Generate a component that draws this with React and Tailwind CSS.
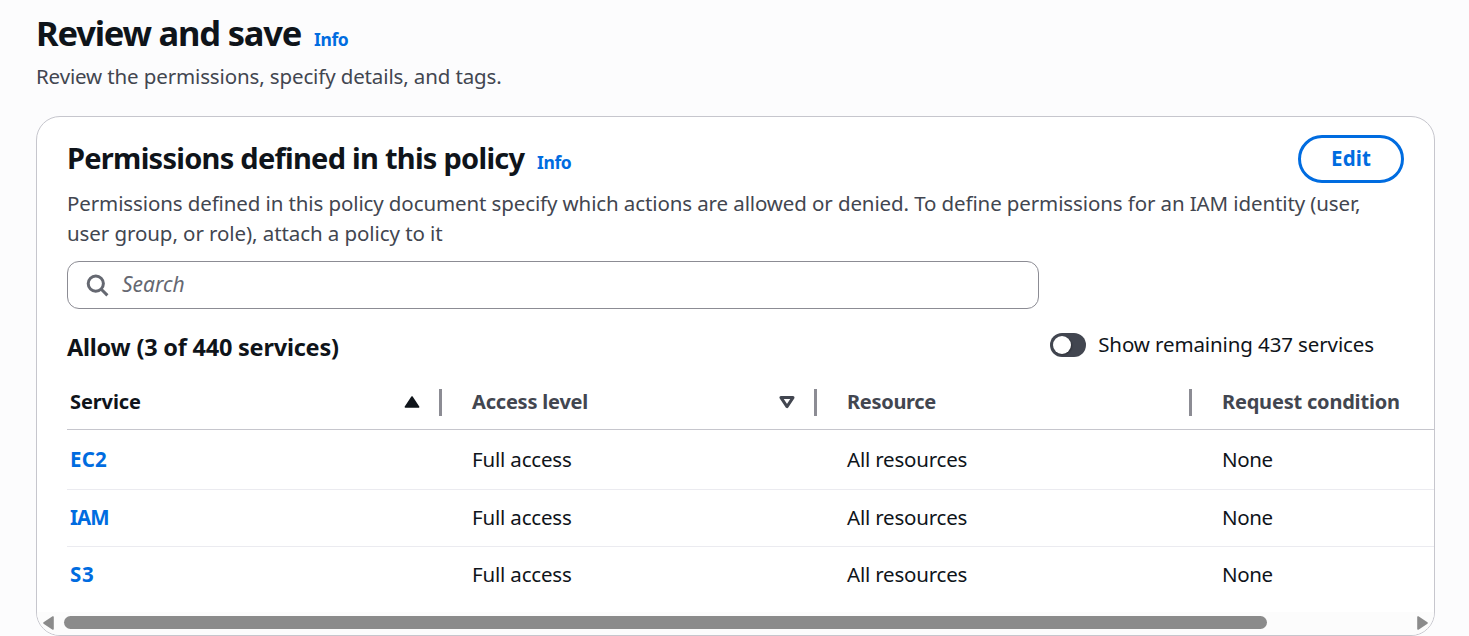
import React from "react";

const columns = [
  { label: "Service", sort: "asc", spacing: "tracking-[-0.1px]" },
  { label: "Access level", sort: "none", spacing: "tracking-[-0.2px]" },
  { label: "Resource", spacing: "tracking-[-0.3px]" },
  { label: "Request condition", spacing: "tracking-[-0.2px]" },
];

const rows = [
  { service: "EC2", spacing: "tracking-[0.2px]", box: "h-[60px] pb-[2px] border-b" },
  { service: "IAM", spacing: "tracking-[-1px]", box: "h-[57px] pb-[2px] border-b" },
  { service: "S3", spacing: "tracking-[0.6px]", box: "h-[57px] pb-[3px]" },
];

function InfoLink() {
  return (
    <a href="#" className="text-[17.5px] leading-6 font-bold tracking-[-0.4px] text-[#006ce0]">
      Info
    </a>
  );
}

function SearchIcon() {
  return (
    <svg width="24" height="24" viewBox="0 0 24 24" fill="none" stroke="#656871" strokeWidth="3">
      <circle cx="9.8" cy="10.6" r="7.6" />
      <path d="M15 16 L21.4 22.4" />
    </svg>
  );
}

function SortIcon({ kind }) {
  if (kind === "asc") {
    return (
      <svg width="16" height="14" viewBox="0 0 16 14">
        <path d="M8 2 L14.6 12 H1.4 Z" fill="#0f141a" stroke="#0f141a" strokeWidth="1.6" strokeLinejoin="round" />
      </svg>
    );
  }
  return (
    <svg width="16" height="14" viewBox="0 0 16 14">
      <path d="M2 2.6 H14 L8 11.6 Z" fill="none" stroke="#424650" strokeWidth="3" strokeLinejoin="round" />
    </svg>
  );
}

export default function App() {
  return (
    <div className="flex h-[636px] w-[1469px] flex-col overflow-hidden bg-[#fcfcfd] pl-9 pt-[11px] font-['Noto_Sans',sans-serif] text-[20.5px] leading-[30px] tracking-[-0.11px] text-[#0f141a]">
      <header>
        <div className="flex h-11 items-baseline">
          <h1 className="w-[278px] whitespace-nowrap text-[34.5px] font-bold leading-[44px] tracking-[-1.2px]">Review and save</h1>
          <InfoLink />
        </div>
        <p className="mt-[6px] tracking-[-0.13px] text-[#424650]">Review the permissions, specify details, and tags.</p>
      </header>

      <section className="mt-[25px] flex h-[520px] w-[1399px] flex-col overflow-hidden rounded-3xl border border-[#c6c6cd] bg-white">
        <div className="flex flex-col px-[30px] pt-[18px]">
          <div className="flex h-[53px] justify-between">
            <div className="flex items-baseline pt-[5px]">
              <h2 className="w-[470px] whitespace-nowrap text-[29px] font-bold leading-9 tracking-[-0.73px]">
                Permissions defined in this policy
              </h2>
              <InfoLink />
            </div>
            <button className="flex h-12 w-[106px] items-center justify-center rounded-full border-[3px] border-[#006ce0] pb-[2px] font-bold tracking-[0.1px] text-[#006ce0]">
              Edit
            </button>
          </div>
          <p className="whitespace-nowrap text-[#424650]">
            Permissions defined in this policy document specify which actions are allowed or denied. To define permissions for an IAM identity (user,
            <br />
            <span className="tracking-[-0.08px]">user group, or role), attach a policy to it</span>
          </p>
          <div className="mt-[13px] flex h-12 w-[972px] items-center rounded-xl border border-[#8c8c94] pl-[18px]">
            <SearchIcon />
            <span className="ml-3 pb-[2px] text-[21px] italic tracking-normal text-[#656871]">Search</span>
          </div>
          <div className="mt-5 flex h-[54px] items-start justify-between pr-[30px]">
            <h3 className="mt-[3px] text-[23.5px] font-bold tracking-[-0.22px]">Allow (3 of 440 services)</h3>
            <label className="flex items-center">
              <span className="mr-3 mt-px flex h-6 w-9 items-center rounded-full bg-[#424650] pl-[3px]">
                <span className="size-[18px] rounded-full bg-white shadow-[1px_1px_2px_rgba(0,0,0,0.3)]" />
              </span>
              <span>Show remaining 437 services</span>
            </label>
          </div>
        </div>

        <div className="ml-[30px] grow overflow-hidden">
          <div className="flex h-[47px] w-[1500px] border-b border-[#c6c6cd] pt-[3px] text-[20px] font-bold text-[#424650]">
            {columns.map((col, i) => (
              <div key={col.label} className={`flex h-[30px] w-[375px] items-center justify-between ${i === 0 ? "pl-[3px] text-[#0f141a]" : "pl-[30px]"}`}>
                <span className={`pt-[2px] ${col.spacing}`}>{col.label}</span>
                <span className="flex items-center gap-[19px] pt-[2px]">
                  {col.sort && <SortIcon kind={col.sort} />}
                  <span className="h-[27px] w-[3px] bg-[#8c8c94]" />
                </span>
              </div>
            ))}
          </div>
          {rows.map((row) => (
            <div key={row.service} className={`flex w-[1500px] items-center border-[#ebebf0] ${row.box}`}>
              <div className={`w-[375px] pl-[3px] font-bold text-[#006ce0] ${row.spacing}`}>{row.service}</div>
              <div className="w-[375px] pl-[30px] tracking-[-0.18px]">Full access</div>
              <div className="w-[375px] pl-[30px] tracking-[-0.2px]">All resources</div>
              <div className="w-[375px] pl-[30px] tracking-[-0.4px]">None</div>
            </div>
          ))}
        </div>

        <div className="flex h-[23px] items-center justify-between bg-[#fcfcfc] px-[6px] pb-[2px]">
          <svg width="11" height="14" viewBox="0 0 11 14">
            <path d="M10 1 V13 L1 7 Z" fill="#8b8b8b" stroke="#8b8b8b" strokeWidth="1.6" strokeLinejoin="round" />
          </svg>
          <div className="flex grow pl-[10px]">
            <div className="h-[13px] w-[1203px] rounded-full bg-[#8b8b8b]" />
          </div>
          <svg width="11" height="14" viewBox="0 0 11 14">
            <path d="M1 1 V13 L10 7 Z" fill="#8b8b8b" stroke="#8b8b8b" strokeWidth="1.6" strokeLinejoin="round" />
          </svg>
        </div>
      </section>
    </div>
  );
}
